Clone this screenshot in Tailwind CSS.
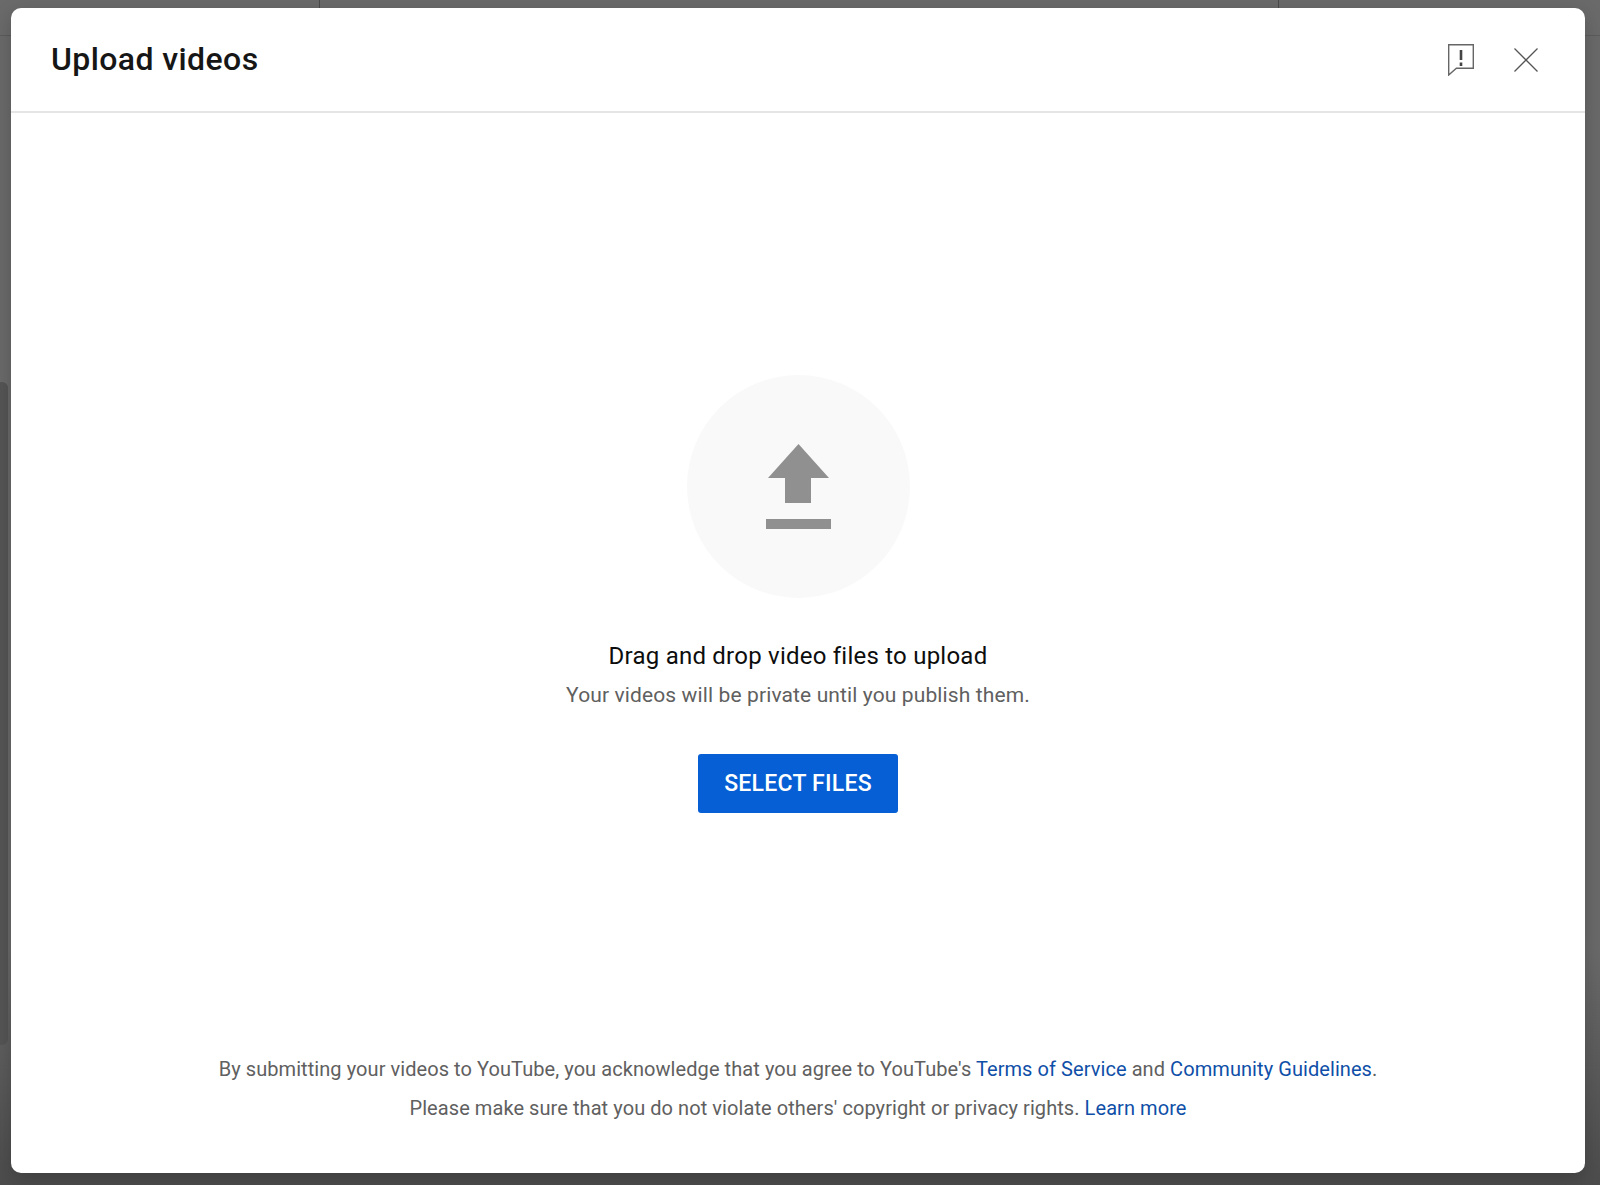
<!DOCTYPE html>
<html lang="en">
<head>
  <meta charset="UTF-8">
  <title>Upload videos</title>
  <script src="https://cdn.jsdelivr.net/npm/@tailwindcss/browser@4"></script>
</head>
<body class="relative h-[1185px] w-[1600px] overflow-hidden bg-gradient-to-b from-[#6a6a6a] from-80% to-[#4c4c4c] font-['Roboto',sans-serif]">
  <!-- page dimmed behind the dialog -->
  <div class="absolute left-0 top-[35px] h-px w-full bg-[#5c5c5c]"></div>
  <div class="absolute left-[319px] top-0 h-[8px] w-px bg-[#4a4a4a]"></div>
  <div class="absolute left-[1278px] top-0 h-[8px] w-px bg-[#4a4a4a]"></div>
  <div class="absolute left-[-4px] top-[382px] h-[663px] w-[12px] rounded-md bg-[#555555]"></div>
  <div class="absolute left-0 top-[1067px] h-px w-full bg-[#5c5c5c]"></div>

  <div class="relative pl-[11px] pt-[8px]">
    <div class="flex h-[1165px] w-[1574px] flex-col rounded-[10px] bg-white shadow-[0_6px_20px_rgba(0,0,0,0.2)]">
      <header class="flex h-[105px] shrink-0 items-center justify-between border-b-2 border-[#e5e5e5] pb-[2px] pl-[40px] pr-[47px]">
        <h1 class="text-[32px] font-medium leading-none tracking-[0.4px] text-[#161616]">Upload videos</h1>
        <div class="mt-[2px] flex items-center gap-[40px]">
          <svg class="h-[32px] w-[26px]" viewBox="0 0 26 32" fill="none" stroke="#666" stroke-width="1.4">
            <path d="M.7.7h24.6v23.6H8.4L.7 31z"/>
            <path d="M13 6v10M13 18.5v3.5" stroke="#444" stroke-width="2.6"/>
          </svg>
          <svg class="h-[24px] w-[24px]" viewBox="0 0 24 24" fill="none" stroke="#555" stroke-width="1.3">
            <path d="M.5.5l23 23M23.5.5l-23 23"/>
          </svg>
        </div>
      </header>

      <main class="flex flex-1 flex-col items-center pt-[262px]">
        <div class="flex h-[223px] w-[223px] items-center justify-center rounded-full bg-[#f9f9f9]">
          <svg class="h-[85px] w-[65px]" viewBox="0 0 65 85" fill="#909090">
            <path d="M32.5 0L63 34H45v25H19V34H2z"/>
            <rect x="0" y="75" width="65" height="10"/>
          </svg>
        </div>
        <p class="mt-[44px] text-[24px] leading-[28px] tracking-[0.23px] text-[#0d0d0d]">Drag and drop video files to upload</p>
        <p class="mt-[11px] text-[21px] leading-[28px] tracking-[0.12px] text-[#606060]">Your videos will be private until you publish them.</p>
        <button class="mt-[45px] h-[59px] w-[200px] rounded-[3px] bg-[#065fd4] pt-[2px] text-[23px] font-medium tracking-[0.25px] text-white">SELECT FILES</button>
      </main>

      <footer class="flex flex-col items-center gap-[11px] pb-[51px] text-[20px] leading-[28px] tracking-[0.07px] text-[#606060]">
        <p>By submitting your videos to YouTube, you acknowledge that you agree to YouTube's <a class="text-[#0f4fa8]">Terms of Service</a> and <a class="text-[#0f4fa8]">Community Guidelines</a>.</p>
        <p>Please make sure that you do not violate others' copyright or privacy rights. <a class="text-[#0f4fa8]">Learn more</a></p>
      </footer>
    </div>
  </div>
</body>
</html>
